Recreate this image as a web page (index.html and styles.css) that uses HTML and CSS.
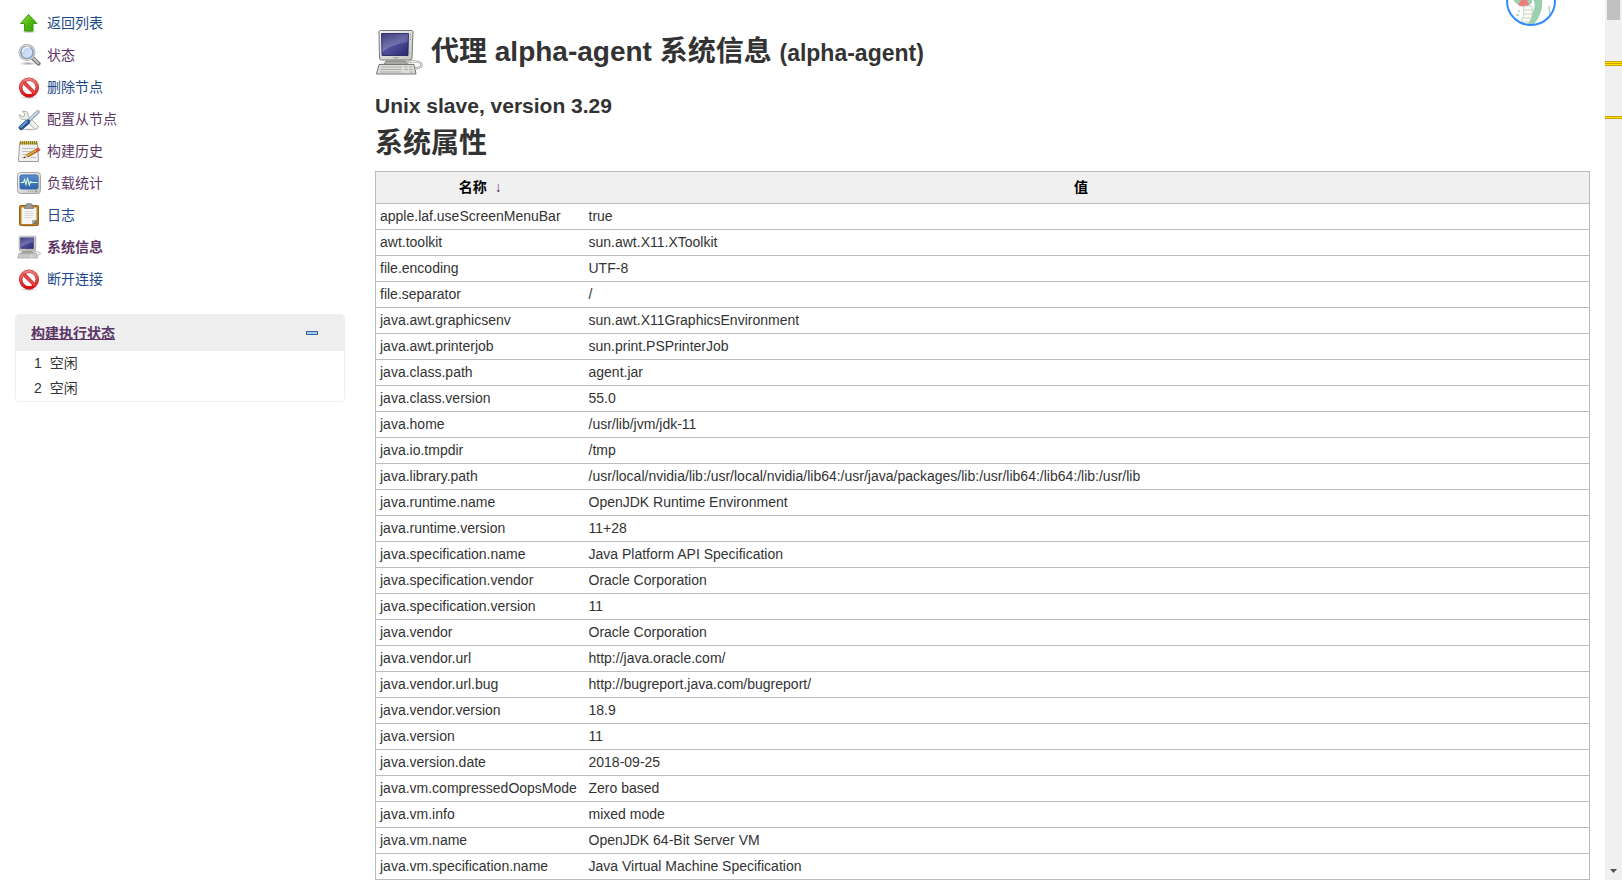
FILE: index.html
```html
<!DOCTYPE html>
<html lang="zh-CN">
<head>
<meta charset="utf-8">
<title>代理 alpha-agent 系统信息</title>
<link rel="stylesheet" href="styles.css">
</head>
<body>
<svg class="defs" aria-hidden="true">
  <defs>
    <linearGradient id="green" x1="0" y1="0" x2="1" y2="1"><stop offset="0" stop-color="#9be04a"/><stop offset="0.5" stop-color="#4fb80e"/><stop offset="1" stop-color="#3c9a06"/></linearGradient>
    <linearGradient id="red" x1="0" y1="0" x2="0" y2="1"><stop offset="0" stop-color="#f08080"/><stop offset="1" stop-color="#d80c0c"/></linearGradient>
    <linearGradient id="glass" x1="0" y1="0" x2="1" y2="1"><stop offset="0" stop-color="#a9c6ee"/><stop offset="0.6" stop-color="#d3e2f6"/><stop offset="1" stop-color="#b5cdf0"/></linearGradient>
    <linearGradient id="screen" x1="0" y1="0" x2="1" y2="1"><stop offset="0" stop-color="#2e2e70"/><stop offset="0.5" stop-color="#50509a"/><stop offset="1" stop-color="#26266a"/></linearGradient>
    <linearGradient id="shine" x1="0" y1="0" x2="0" y2="1"><stop offset="0" stop-color="#fff" stop-opacity="0.08"/><stop offset="1" stop-color="#fff" stop-opacity="0.28"/></linearGradient>
    <linearGradient id="metal" x1="0" y1="0" x2="1" y2="1"><stop offset="0" stop-color="#f4f4f2"/><stop offset="1" stop-color="#c4c5c0"/></linearGradient>
    <linearGradient id="blue" x1="0" y1="0" x2="0" y2="1"><stop offset="0" stop-color="#5b8fce"/><stop offset="1" stop-color="#2c62ae"/></linearGradient>
    <radialGradient id="shadow"><stop offset="0" stop-color="#000" stop-opacity="0.35"/><stop offset="1" stop-color="#000" stop-opacity="0"/></radialGradient>
  </defs>
  <symbol id="i-up" viewBox="0 0 24 24">
    <ellipse cx="12" cy="20.5" rx="8" ry="2" fill="url(#shadow)"/>
    <path d="M11.5 3.5 20 12.5h-4V20H7.500v-7.500H3.500z" fill="url(#green)" stroke="#3f9a0c" stroke-width="1" stroke-linejoin="round"/>
  </symbol>
  <symbol id="i-search" viewBox="0 0 24 24">
    <ellipse cx="11" cy="20.500" rx="9" ry="2" fill="url(#shadow)"/>
    <path d="M15 14.500 21.500 20.500" stroke="#777975" stroke-width="4.200" stroke-linecap="round"/>
    <path d="M15 14.200 21.200 20" stroke="#c3c4c0" stroke-width="2" stroke-linecap="round"/>
    <circle cx="10" cy="9.500" r="7.300" fill="url(#glass)" stroke="#a5a6a2" stroke-width="2.400"/>
    <circle cx="10" cy="9.500" r="7.400" fill="none" stroke="#e4e4e2" stroke-width="1"/>
    <circle cx="10" cy="9.500" r="5.900" fill="none" stroke="#5c84bd" stroke-width="0.800"/>
    <path d="M5.500 9a4.800 4.800 0 0 1 7.500-4" fill="none" stroke="#eef4fc" stroke-width="1.500"/>
  </symbol>
  <symbol id="i-no" viewBox="0 0 24 24">
    <ellipse cx="12" cy="22.500" rx="9" ry="1.500" fill="url(#shadow)"/>
    <circle cx="12" cy="12.500" r="8.300" fill="#fff" fill-opacity="0.7" stroke="#c22020" stroke-width="3.400"/>
    <path d="M6 6.500 18 18.500" stroke="#c22020" stroke-width="3.600"/>
    <circle cx="12" cy="12.500" r="8.300" fill="none" stroke="url(#red)" stroke-width="2.400"/>
    <path d="M6 6.500 18 18.500" stroke="#e54848" stroke-width="2.400"/>
  </symbol>
  <symbol id="i-tools" viewBox="0 0 24 24">
    <ellipse cx="12" cy="22.500" rx="10" ry="1.300" fill="url(#shadow)"/>
    <path d="M8 4.500 5.500 4.300l2.500 2.600-.7 2.300-2.500.500L2.500 7.300c-.500 3.500 2.200 5.800 5.400 5.100l9.200 9c2.500 1.900 5.100-.900 3.400-3.200l-9.300-9c.500-3.300-1.400-5.100-3.200-4.700z" fill="#eeefec" stroke="#a3a5a0" stroke-width="0.900"/>
    <path d="M20.800 5 13 12.500" stroke="#8995a5" stroke-width="3.800" stroke-linecap="round"/>
    <path d="M20.600 5 13 12.300" stroke="#c7d5e6" stroke-width="2.200" stroke-linecap="round"/>
    <path d="M10.600 14.800 4.200 20.600" stroke="#28558f" stroke-width="5" stroke-linecap="round"/>
    <path d="M9.800 14.600 4 19.800" stroke="#6a9bd2" stroke-width="2" stroke-linecap="round"/>
  </symbol>
  <symbol id="i-note" viewBox="0 0 24 24">
    <path d="M2.500 4.500h18l1 18H1.500z" fill="#f1f1ef" stroke="#9c9d99"/>
    <path d="M2.500 2.500h18v3h-18z" fill="#c2af45"/>
    <path d="M3.500 2v3.500m2-3.500v3.500m2-3.500v3.500m2-3.500v3.500m2-3.500v3.500m2-3.500v3.500m2-3.500v3.500m2-3.500v3.500m2-3.500v3.500" stroke="#7d6b1c" stroke-width="0.800"/>
    <path d="M5 9.500h13M5 12.500h9M5 15.500h5M5 18.500h3M14 18.500h5" stroke="#c0c1bd"/>
    <path d="M10 17 20 11.200" stroke="#8f5a12" stroke-width="3.400"/>
    <path d="M10 16.800 20 11" stroke="#f0a53a" stroke-width="1.800"/>
    <path d="M19.300 11.600 22.500 9.800" stroke="#d6533c" stroke-width="3.600"/>
    <path d="M6.500 19 9.300 15.500l1.700 2.800z" fill="#d9bb85"/><path d="M6.200 19.300 7.500 17.500l1 1.400z" fill="#222"/>
  </symbol>
  <symbol id="i-monitor" viewBox="0 0 24 24">
    <rect x="0.500" y="1.500" width="23" height="21" rx="3" fill="url(#metal)" stroke="#a7a8a4"/>
    <rect x="3" y="4" width="18" height="14" rx="1.500" fill="url(#blue)" stroke="#3a6cab"/>
    <path d="M3.500 11.500h3l1-3 1.500 5L10.500 7l1.800 7L13.500 10.500l1 1h6" fill="none" stroke="#d6ffd6" stroke-width="1.100"/>
    <path d="M11 20.300h6" stroke="#9c9d99" stroke-dasharray="1 1"/><circle cx="19" cy="20.300" r="1" fill="#8f908c"/>
  </symbol>
  <symbol id="i-clip" viewBox="0 0 24 24">
    <ellipse cx="12" cy="22.900" rx="10" ry="1.100" fill="url(#shadow)"/>
    <rect x="2.500" y="2.500" width="19" height="20" rx="1" fill="#bd7a28" stroke="#9a661a"/>
    <path d="M4.500 4.500h15v12l-4 4.500h-11z" fill="#f5f5f4"/>
    <path d="M7.500 8.500h8M7.500 10.500h9M7.500 12.500h9M7.500 14.500h7" stroke="#d9dad7"/>
    <path d="M19.500 16.500 15 21v-3.500z" fill="#a1a29e"/><path d="M19.500 17v4h-4z" fill="#73746f"/>
    <path d="M7.500 5.500V4q0-1 1.500-1V1.500q0-.8 1-.8h4q1 0 1 .8V3q1.500 0 1.500 1v1.500z" fill="#999b97" stroke="#7a7c78" stroke-width="0.800"/>
  </symbol>
  <symbol id="i-pc" viewBox="0 0 48 48">
    <ellipse cx="22" cy="36" rx="18" ry="4" fill="url(#shadow)"/>
    <path d="M31 34.500c7-2 15-1 15.500 2s-5 4-8 4" fill="none" stroke="#a6a7a3" stroke-width="2.200"/>
    <path d="M31 34.500c7-2 15-1 15.500 2s-5 4-8 4" fill="none" stroke="#eee" stroke-width="1"/>
    <path d="M11 33h19l3 3.500q-12 4-24 0z" fill="#a9aaa5" stroke="#787975" stroke-width="0.800"/>
    <path d="M5.500 2.500h31q1.500 0 1.500 1.500L37 30q0 2-2 2H6.500q-2 0-2-2L4 4q0-1.500 1.500-1.500z" fill="url(#metal)" stroke="#797a76"/>
    <path d="M6.500 5.500h27l-.5 22H7z" fill="url(#screen)" stroke="#1c1c58" stroke-width="0.800"/>
    <path d="M7 6h26l-.5 8Q17 16 7.500 24z" fill="url(#shine)"/>
    <path d="M35.500 6v6" stroke="#888985" stroke-dasharray="1 1.500"/><path d="M18 29.800h5" stroke="#999a96"/>
    <path d="M4 36.500h35l2 9.500H1.500z" fill="#dcddd9" stroke="#777874"/>
    <path d="M6 39h21M5.500 41.500h21M5 44h21M29 39h3.500M29.300 41.500h3.500M34 39h3M34.300 41.500h3.400M34.500 44H38" stroke="#adaea9" stroke-width="1.200"/>
  </symbol>
</svg>
<div class="page">
  <aside class="side">
    <nav class="tasks" aria-label="任务">
      <a href="#list"><svg class="icon"><use href="#i-up"/></svg>返回列表</a>
      <a class="visited" href="#status"><svg class="icon"><use href="#i-search"/></svg>状态</a>
      <a href="#delete"><svg class="icon"><use href="#i-no"/></svg>删除节点</a>
      <a class="visited" href="#configure"><svg class="icon"><use href="#i-tools"/></svg>配置从节点</a>
      <a class="visited" href="#builds"><svg class="icon"><use href="#i-note"/></svg>构建历史</a>
      <a class="visited" href="#load"><svg class="icon"><use href="#i-monitor"/></svg>负载统计</a>
      <a href="#log"><svg class="icon"><use href="#i-clip"/></svg>日志</a>
      <a class="visited current" href="#system"><svg class="icon"><use href="#i-pc"/></svg>系统信息</a>
      <a href="#disconnect"><svg class="icon"><use href="#i-no"/></svg>断开连接</a>
    </nav>
    <section class="executors">
      <header><a href="#executors">构建执行状态</a>
        <button type="button" aria-label="收起"><svg width="12" height="4" viewBox="0 0 12 4"><rect x="0.500" y="0.500" width="11" height="3" fill="#a9cbe9" stroke="#3465a4"/></svg></button>
      </header>
      <ol>
        <li><span>1</span>空闲</li>
        <li><span>2</span>空闲</li>
      </ol>
    </section>
  </aside>
  <main class="main">
    <h1 class="title"><svg class="icon-large"><use href="#i-pc"/></svg><span>代理 alpha-agent 系统信息 <small>(alpha-agent)</small></span></h1>
    <h2 class="version">Unix slave, version 3.29</h2>
    <h1 class="section">系统属性</h1>
    <table class="props">
      <thead><tr><th class="name"><a href="#sort-name">名称<span class="arrow">&nbsp;&nbsp;↓</span></a></th><th><a href="#sort-value">值<span class="arrow">&nbsp;&nbsp;&nbsp;</span></a></th></tr></thead>
      <tbody>
        <tr><td>apple.laf.useScreenMenuBar</td><td>true</td></tr>
        <tr><td>awt.toolkit</td><td>sun.awt.X11.XToolkit</td></tr>
        <tr><td>file.encoding</td><td>UTF-8</td></tr>
        <tr><td>file.separator</td><td>/</td></tr>
        <tr><td>java.awt.graphicsenv</td><td>sun.awt.X11GraphicsEnvironment</td></tr>
        <tr><td>java.awt.printerjob</td><td>sun.print.PSPrinterJob</td></tr>
        <tr><td>java.class.path</td><td>agent.jar</td></tr>
        <tr><td>java.class.version</td><td>55.0</td></tr>
        <tr><td>java.home</td><td>/usr/lib/jvm/jdk-11</td></tr>
        <tr><td>java.io.tmpdir</td><td>/tmp</td></tr>
        <tr><td>java.library.path</td><td>/usr/local/nvidia/lib:/usr/local/nvidia/lib64:/usr/java/packages/lib:/usr/lib64:/lib64:/lib:/usr/lib</td></tr>
        <tr><td>java.runtime.name</td><td>OpenJDK Runtime Environment</td></tr>
        <tr><td>java.runtime.version</td><td>11+28</td></tr>
        <tr><td>java.specification.name</td><td>Java Platform API Specification</td></tr>
        <tr><td>java.specification.vendor</td><td>Oracle Corporation</td></tr>
        <tr><td>java.specification.version</td><td>11</td></tr>
        <tr><td>java.vendor</td><td>Oracle Corporation</td></tr>
        <tr><td>java.vendor.url</td><td>http://java.oracle.com/</td></tr>
        <tr><td>java.vendor.url.bug</td><td>http://bugreport.java.com/bugreport/</td></tr>
        <tr><td>java.vendor.version</td><td>18.9</td></tr>
        <tr><td>java.version</td><td>11</td></tr>
        <tr><td>java.version.date</td><td>2018-09-25</td></tr>
        <tr><td>java.vm.compressedOopsMode</td><td>Zero based</td></tr>
        <tr><td>java.vm.info</td><td>mixed mode</td></tr>
        <tr><td>java.vm.name</td><td>OpenJDK 64-Bit Server VM</td></tr>
        <tr><td>java.vm.specification.name</td><td>Java Virtual Machine Specification</td></tr>
      </tbody>
    </table>
    <svg class="avatar" viewBox="0 0 50 50" role="img" aria-label="助手">
      <clipPath id="disc"><circle cx="25" cy="25" r="24"/></clipPath>
      <circle cx="25" cy="25" r="24" fill="#fff"/>
      <g clip-path="url(#disc)">
        <path d="M25 20h11q2 17-8 28l-7 2 4-10q5-9 3-15z" fill="#9bd0b0"/>
        <path d="M6 22h20v4q-2 4-6 4-8 2-14-8z" fill="#9bd0b0"/>
        <path d="M15 24h6l2 5q-5 3-11 0z" fill="#ee7c7c"/>
        <path d="M18 30h8q2 10-4 18l-8 1q5-9 4-19z" fill="#fcfcf4" stroke="#b9cbbc" stroke-width="0.800"/>
        <path d="M18 34h8.500M18 38h8M17 42h7M15 46h8" stroke="#b9cbbc" stroke-width="0.800"/>
        <path d="M43 30 44 40M10 39h3M12 35h2" stroke="#b4cfbd" stroke-width="1.500"/>
      </g>
      <circle cx="25" cy="25" r="24" fill="none" stroke="#2d8cff" stroke-width="2"/>
    </svg>
  </main>
  <div class="scroll" aria-hidden="true">
    <div class="thumb"></div>
    <div class="mark double"></div>
    <div class="mark"></div>
    <svg class="down" width="7" height="4" viewBox="0 0 7 4"><path d="M0 0h7L3.500 4z" fill="#505050"/></svg>
  </div>
</div>
</body>
</html>
```

FILE: styles.css
```css
* { box-sizing: border-box; }

body {
  margin: 0;
  background: #fff;
  color: #333;
  font: 14px/20px "Liberation Sans", "Noto Sans CJK SC", sans-serif;
}

a { color: #204a87; text-decoration: none; }
.visited, .executors a { color: #5c3566; }
.defs { position: absolute; width: 0; height: 0; }

.page {
  display: flex;
  height: 100vh;
  overflow: hidden;
}

.side {
  flex: 0 0 360px;
  padding: 7px 15px;
}

.tasks { display: flex; flex-direction: column; }
.tasks a {
  display: flex;
  align-items: center;
  gap: 6px;
  height: 32px;
  padding-left: 2px;
}
.tasks .current { font-weight: bold; }
.icon { width: 24px; height: 24px; }

.executors {
  margin-top: 19px;
  border: 1px solid #eee;
  border-radius: 4px;
  overflow: hidden;
}
.executors header {
  display: flex;
  align-items: center;
  justify-content: space-between;
  height: 36px;
  padding: 0 26px 0 15px;
  background: #eee;
}
.executors a { font-weight: bold; text-decoration: underline; }
.executors button {
  display: flex;
  padding: 0;
  border: 0;
  background: none;
}
.executors ol {
  margin: 0;
  padding: 0 18px;
  list-style: none;
}
.executors li { display: flex; gap: 8px; line-height: 25px; }

.main {
  position: relative;
  flex: 1;
  min-width: 0;
  padding: 28px 15px 0;
}

h1, h2 { margin: 0; font-weight: bold; }
h1 { font-size: 28px; line-height: 40px; }
.title {
  display: flex;
  align-items: center;
  gap: 8px;
  height: 48px;
}
.title small { font-size: 23px; }
.icon-large { width: 48px; height: 48px; }
.version {
  margin-top: 18px;
  font-size: 21px;
  line-height: 24px;
}
.section { margin: 6px 0 7px; }

.props {
  width: 100%;
  border-collapse: collapse;
  border: 1px solid #bbb;
}
.props th, .props td {
  padding: 2px 4px 3px;
  border-bottom: 1px solid #bbb;
  text-align: left;
}
.props th {
  padding: 5px 4px 6px;
  background: #f0f0f0;
  text-align: center;
}
.props th.name { width: 209px; }
.props th a { color: #000; }
.props .arrow { color: #5c3566; font-weight: normal; }

.avatar {
  position: absolute;
  top: -24px;
  right: 49px;
  width: 50px;
  height: 50px;
}

.scroll {
  display: flex;
  flex: 0 0 17px;
  flex-direction: column;
  align-items: center;
  background: #f0f0f0;
}
.thumb { width: 13px; height: 20px; background: #c1c1c1; }
.mark {
  width: 100%;
  height: 3px;
  margin-top: 50px;
  border: solid #c9a400;
  border-width: 1px 0;
  background: #ffe100;
}
.mark.double {
  height: 5px;
  margin-top: 41px;
  background: linear-gradient(#ffe100 1px, #c9a400 1px 2px, #ffe100 2px);
}
.down { margin: auto 0 7px; }
```
